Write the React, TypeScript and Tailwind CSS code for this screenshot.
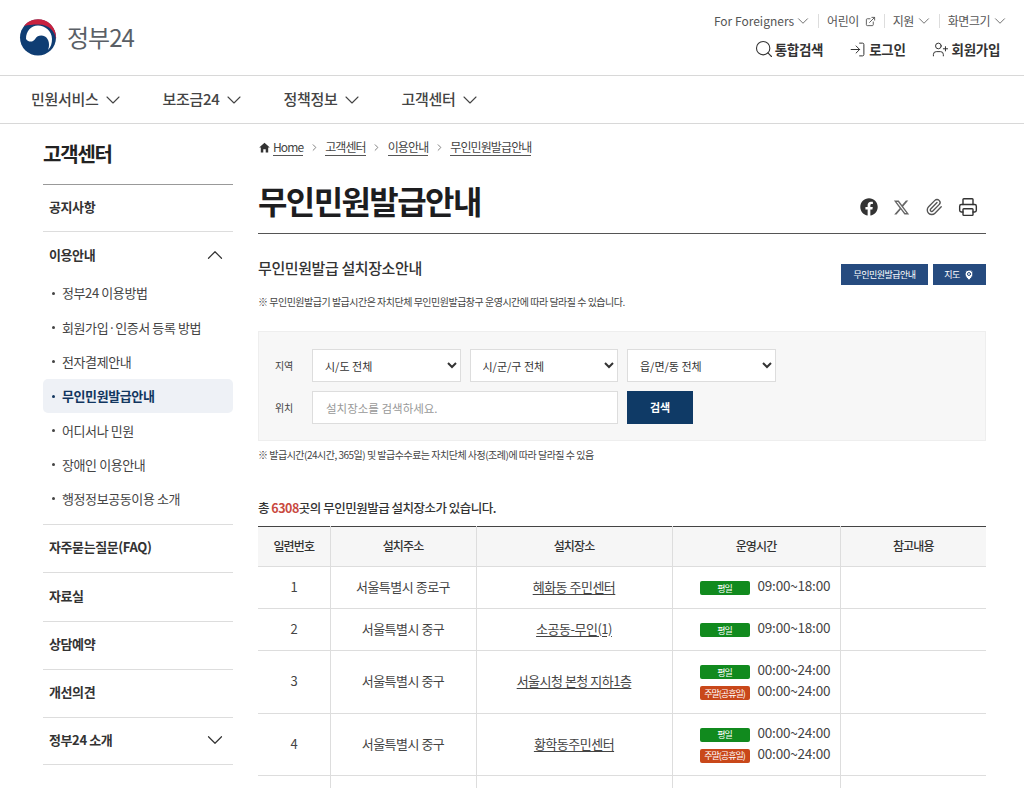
import { ChevronDown, ChevronRight, ChevronUp, ExternalLink, LogIn, MapPin, Paperclip, Printer, Search, UserPlus } from 'lucide-react';
import { FaFacebook } from 'react-icons/fa';
import { FaXTwitter } from 'react-icons/fa6';
import { IoMdHome } from 'react-icons/io';

const font = { fontFamily: '"Noto Sans CJK KR", Inter, "Noto Sans", sans-serif' };

const navItems = ['민원서비스', '보조금24', '정책정보', '고객센터'];
const subItems = ['정부24 이용방법', '회원가입·인증서 등록 방법', '전자결제안내', '무인민원발급안내', '어디서나 민원', '장애인 이용안내', '행정정보공동이용 소개'];
const crumbs = ['고객센터', '이용안내', '무인민원발급안내'];

const rows = [
  { no: 1, addr: '서울특별시 종로구', place: '혜화동 주민센터', time: '09:00~18:00', holiday: '', h: 'h-[42px]' },
  { no: 2, addr: '서울특별시 중구', place: '소공동-무인(1)', time: '09:00~18:00', holiday: '', h: 'h-[42px]' },
  { no: 3, addr: '서울특별시 중구', place: '서울시청 본청 지하1층', time: '00:00~24:00', holiday: '00:00~24:00', h: 'h-[63px]' },
  { no: 4, addr: '서울특별시 중구', place: '황학동주민센터', time: '00:00~24:00', holiday: '00:00~24:00', h: 'h-[62px]' },
];

function Logo() {
  return (
    <svg width="38" height="37" viewBox="0 0 38 37">
      <circle cx="19" cy="18.500" r="18" fill="#0f3d73" />
      <path d="M5 7A18 18 0 0 1 37 20C36 12 29 5 19 5.500C14 5.500 9 6 5 7Z" fill="#c8213f" />
      <path d="M7 20C7 12 12 6.500 19 6.500C26 6.500 33 12 33 20C33 24 32 28 29 31C31 26 30 20 26 17.500C22 15.500 18 17 16.500 19.500C14.500 23 10 24 7 20Z" fill="#fff" />
    </svg>
  );
}

function Badge({ holiday }: { holiday?: boolean }) {
  return (
    <span className={`mt-[5px] flex h-[14px] w-[50px] items-center justify-center rounded-[2px] text-[9px] leading-none tracking-[-1px] text-white ${holiday ? 'bg-[#c9481a]' : 'bg-[#118a1e]'}`}>
      {holiday ? '주말(공휴일)' : '평일'}
    </span>
  );
}

function SideLink({ label, className }: { label: string; className: string }) {
  return (
    <div className={`flex items-center border-b border-[#ddd] pb-[3px] pl-[6px] text-[13px] font-bold tracking-[-0.4px] text-[#333] ${className}`}>
      {label}
    </div>
  );
}

export default function App() {
  return (
    <div style={font} className="flex h-[788px] w-[1024px] flex-col overflow-hidden bg-white text-[#333]">
      <header className="flex h-[76px] shrink-0 justify-between border-b border-[#d8d8d8] pl-[19px] pr-[15px]">
        <div className="flex items-center gap-[10px] pb-[1px]">
          <Logo />
          <span className="text-[24px] leading-none tracking-[-1px] text-[#5a5f66]">정부24</span>
        </div>
        <div className="flex flex-col items-end pt-[12px]">
          <div className="flex items-center text-[12px] leading-[16px] text-[#555]">
            <span>For Foreigners</span>
            <ChevronDown size={18} strokeWidth={1.1} />
            <span className="ml-[6px] mr-[8px] h-[14px] w-px bg-[#ddd]" />
            <span className="tracking-[-0.5px]">어린이</span>
            <ExternalLink size={11} className="ml-[6px]" />
            <span className="mx-[8px] h-[14px] w-px bg-[#ddd]" />
            <span className="tracking-[-0.5px]">지원</span>
            <ChevronDown size={18} strokeWidth={1.1} className="ml-[1px]" />
            <span className="ml-[6px] mr-[8px] h-[14px] w-px bg-[#ddd]" />
            <span className="tracking-[-0.5px]">화면크기</span>
            <ChevronDown size={18} strokeWidth={1.1} className="ml-[1px]" />
          </div>
          <div className="mr-[9px] mt-[9px] flex items-center gap-[26px] text-[13.500px] font-bold leading-[18px] tracking-[-0.3px] text-[#333]">
            <span className="flex items-center gap-[1px]"><Search size={20} strokeWidth={1.3} /> 통합검색</span>
            <span className="flex items-center gap-[3px]"><LogIn size={17} strokeWidth={1.4} /> 로그인</span>
            <span className="flex items-center gap-[3px]"><UserPlus size={17} strokeWidth={1.4} /> 회원가입</span>
          </div>
        </div>
      </header>

      <nav className="flex h-[48px] shrink-0 items-center gap-[38px] border-b border-[#d8d8d8] pl-[31px] text-[15px] font-medium tracking-[-0.3px] text-[#444]">
        {navItems.map((item) => (
          <span key={item} className="flex items-center gap-[2px]">
            {item}
            <ChevronDown size={24} strokeWidth={1.1} />
          </span>
        ))}
      </nav>

      <div className="flex min-h-0 flex-1 gap-[25px] pl-[43px]">
        <aside className="w-[190px] shrink-0">
          <h2 className="flex h-[61px] items-center border-b border-[#999] text-[20px] font-bold tracking-[-1.2px] text-[#222]">고객센터</h2>
          <SideLink label="공지사항" className="h-[47px]" />
          <div className="border-b border-[#ddd] pb-[8px]">
            <div className="flex h-[47px] items-center justify-between pb-[2px] pl-[6px] pr-[5px] text-[13px] font-bold tracking-[-0.4px] text-[#333]">
              이용안내 <ChevronUp size={26} strokeWidth={1.1} />
            </div>
            <ul className="mt-[-3px] text-[13px] tracking-[-0.4px] text-[#444]">
              {subItems.map((sub) => (
                <li key={sub} className={`flex h-[34.300px] items-center gap-[7px] rounded-[5px] pl-[9px] ${sub === '무인민원발급안내' ? 'bg-[#eef1f6] font-bold text-[#12365f]' : ''}`}>
                  <span className="h-[3px] w-[3px] rounded-full bg-current" />
                  {sub}
                </li>
              ))}
            </ul>
          </div>
          <SideLink label="자주묻는질문(FAQ)" className="h-[48px]" />
          <SideLink label="자료실" className="h-[49px]" />
          <SideLink label="상담예약" className="h-[48px]" />
          <SideLink label="개선의견" className="h-[48px]" />
          <div className="flex h-[47px] items-center justify-between border-b border-[#ddd] pb-[2px] pl-[6px] pr-[5px] text-[13px] font-bold tracking-[-0.4px] text-[#333]">
            정부24 소개 <ChevronDown size={26} strokeWidth={1.1} />
          </div>
        </aside>

        <main className="w-[728px] shrink-0">
          <div className="flex h-[47px] items-center text-[12px] tracking-[-0.9px] text-[#444]">
            <IoMdHome size={13} className="mr-[2px] text-[#333]" />
            <span className="border-b border-[#555] leading-[16px]">Home</span>
            {crumbs.map((crumb) => (
              <span key={crumb} className="flex items-center">
                <ChevronRight size={11} className="mx-[5.500px] text-[#777]" />
                <span className="border-b border-[#555] leading-[16px]">{crumb}</span>
              </span>
            ))}
          </div>
          <div className="flex h-[63px] items-center justify-between border-b border-[#555] pb-[4px]">
            <h1 className="text-[32px] font-bold leading-none tracking-[-1.6px] text-[#1d1d1f]">무인민원발급안내</h1>
            <div className="mt-[14px] flex items-center gap-[15px] pr-[8px] text-[#333]">
              <FaFacebook size={18} />
              <FaXTwitter size={17} className="text-[#666]" />
              <Paperclip size={18} strokeWidth={1.8} className="text-[#555]" />
              <Printer size={20} strokeWidth={1.7} />
            </div>
          </div>

          <div className="mt-[23px] flex items-start justify-between">
            <h3 className="text-[15px] font-medium leading-[22px] tracking-[-0.4px] text-[#333]">무인민원발급 설치장소안내</h3>
            <div className="mt-[7px] flex gap-[5px] text-[9px] tracking-[-0.5px] text-white">
              <span className="flex h-[21px] w-[87px] items-center justify-center bg-[#264b7f]">무인민원발급안내</span>
              <span className="flex h-[21px] w-[53px] items-center justify-center gap-[3px] bg-[#264b7f]">지도 <MapPin size={12} fill="#fff" stroke="#264b7f" /></span>
            </div>
          </div>
          <p className="mt-[10px] text-[10px] leading-[14px] tracking-[-0.5px] text-[#444]">※ 무인민원발급기 발급시간은 자치단체 무인민원발급창구 운영시간에 따라 달라질 수 있습니다.</p>

          <div className="mt-[22px] flex h-[110px] flex-col gap-[9px] border border-[#eee] bg-[#f7f7f7] pl-[16px] pt-[17px] text-[10px] text-[#444]">
            <div className="flex items-center gap-[9px]">
              <span className="mr-[-1px] w-[29px] tracking-[-0.3px]">지역</span>
              {['시/도 전체', '시/군/구 전체', '읍/면/동 전체'].map((label) => (
                <select key={label} defaultValue={label} className="h-[33px] w-[148.500px] border border-[#ddd] bg-white pl-[8px] text-[11px] text-[#333]">
                  <option>{label}</option>
                </select>
              ))}
            </div>
            <div className="flex items-center gap-[9px]">
              <span className="mr-[-1px] w-[29px] tracking-[-0.3px]">위치</span>
              <input placeholder="설치장소를 검색하세요." className="h-[33px] w-[306px] border border-[#ddd] bg-white pl-[13px] text-[11.500px] placeholder:text-[#999]" />
              <button className="h-[33px] w-[66px] bg-[#0f3a66] text-[11px] font-bold text-white">검색</button>
            </div>
          </div>
          <p className="mt-[7px] text-[10px] leading-[14px] tracking-[-0.5px] text-[#444]">※ 발급시간(24시간, 365일) 및 발급수수료는 자치단체 사정(조례)에 따라 달라질 수 있음</p>

          <p className="mt-[37px] text-[12.500px] font-medium leading-[18px] tracking-[-0.5px] text-[#333]">
            총 <span className="font-bold text-[#c94a3f]">6308</span>곳의 무인민원발급 설치장소가 있습니다.
          </p>

          <table className="mt-[9px] w-[728px] table-fixed border-collapse border-t border-[#444] text-[13px] tracking-[-0.5px] text-[#444]">
            <colgroup>
              <col className="w-[72px]" />
              <col className="w-[146px]" />
              <col className="w-[196px]" />
              <col className="w-[168px]" />
              <col className="w-[146px]" />
            </colgroup>
            <thead>
              <tr className="h-[40px] bg-[#f6f6f6] text-[12px] text-[#333]">
                {['일련번호', '설치주소', '설치장소', '운영시간', '참고내용'].map((head, i) => (
                  <th key={head} className={`border-b border-[#ddd] pb-[2px] font-medium tracking-[-0.9px] ${i > 0 ? 'border-l' : ''}`}>{head}</th>
                ))}
              </tr>
            </thead>
            <tbody>
              {rows.map((row) => (
                <tr key={row.no} className={`${row.h} border-b border-[#ddd] text-center`}>
                  <td className="pb-[2px]">{row.no}</td>
                  <td className="border-l border-[#ddd] pb-[2px]">{row.addr}</td>
                  <td className="border-l border-[#ddd] pb-[2px]"><span className="underline underline-offset-2">{row.place}</span></td>
                  <td className="border-l border-[#ddd] pb-[4px] pl-[27px]">
                    <div className="flex items-center gap-[8px] text-[13.500px] leading-[21px] tracking-[-0.2px]"><Badge /> {row.time}</div>
                    {row.holiday && <div className="flex items-center gap-[8px] text-[13.500px] leading-[21px] tracking-[-0.2px]"><Badge holiday /> {row.holiday}</div>}
                  </td>
                  <td className="border-l border-[#ddd]" />
                </tr>
              ))}
              <tr className="h-[40px]">
                <td />
                <td className="border-l border-[#ddd]" />
                <td className="border-l border-[#ddd]" />
                <td className="border-l border-[#ddd]" />
                <td className="border-l border-[#ddd]" />
              </tr>
            </tbody>
          </table>
        </main>
      </div>
    </div>
  );
}
